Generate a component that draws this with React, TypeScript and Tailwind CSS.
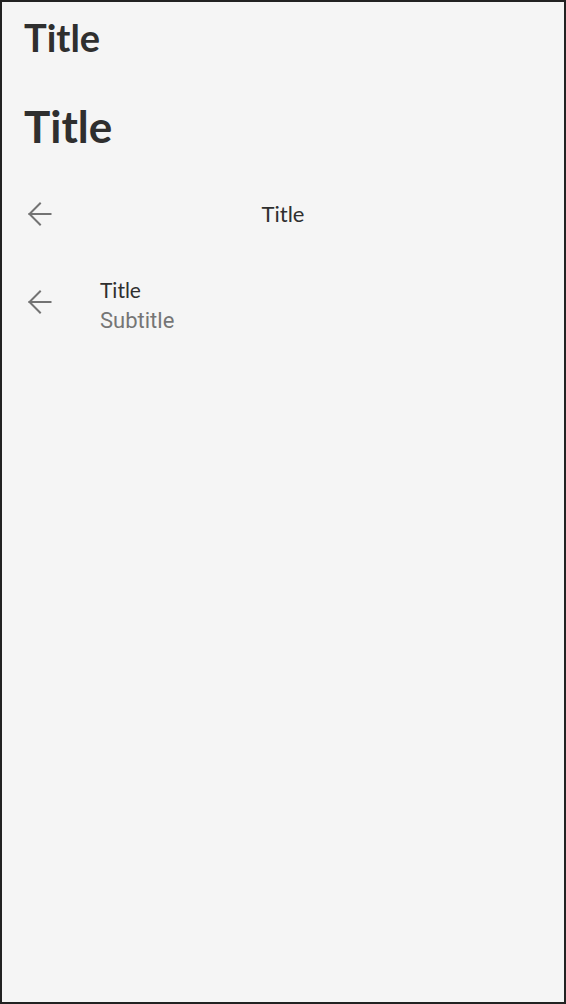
import { ReactNode } from 'react'

const jost = { fontFamily: 'Lato, "Noto Sans", sans-serif' }

function BackArrow() {
  return (
    <svg width="24" height="24" viewBox="0 0 24 24" fill="none" stroke="#737373" strokeWidth="2" strokeLinecap="square">
      <path d="M1.5 12H22.5" />
      <path d="M12 1.5 1.5 12 12 22.5" />
    </svg>
  )
}

function Bar({ children }: { children: ReactNode }) {
  return <div className="relative flex h-16 items-center">{children}</div>
}

export default function App() {
  return (
    <div className="flex h-[1004px] w-[566px] flex-col border-2 border-[#222222] bg-[#f5f5f5] text-[#2f2f2f]">
      <div className="px-[22px] pt-[13px]">
        <h1 className="text-[38px] font-bold leading-[1.2]" style={jost}>Title</h1>
        <h1 className="mt-[39px] text-[44px] font-bold leading-[1.2]" style={jost}>Title</h1>
      </div>

      <div className="mt-[30px]">
        <Bar>
          <div className="pl-[26px]"><BackArrow /></div>
          <div className="absolute inset-x-0 text-center text-[22px] leading-none" style={jost}>Title</div>
        </Bar>
      </div>

      <div className="mt-[24px]">
        <Bar>
          <div className="pl-[26px]"><BackArrow /></div>
          <div className="ml-[48px] mt-[8px] flex flex-col">
            <span className="text-[21px] leading-[30px]" style={jost}>Title</span>
            <span className="text-[22px] leading-[32px] text-[#757575]" style={{ fontFamily: 'Roboto, sans-serif' }}>Subtitle</span>
          </div>
        </Bar>
      </div>
    </div>
  )
}
